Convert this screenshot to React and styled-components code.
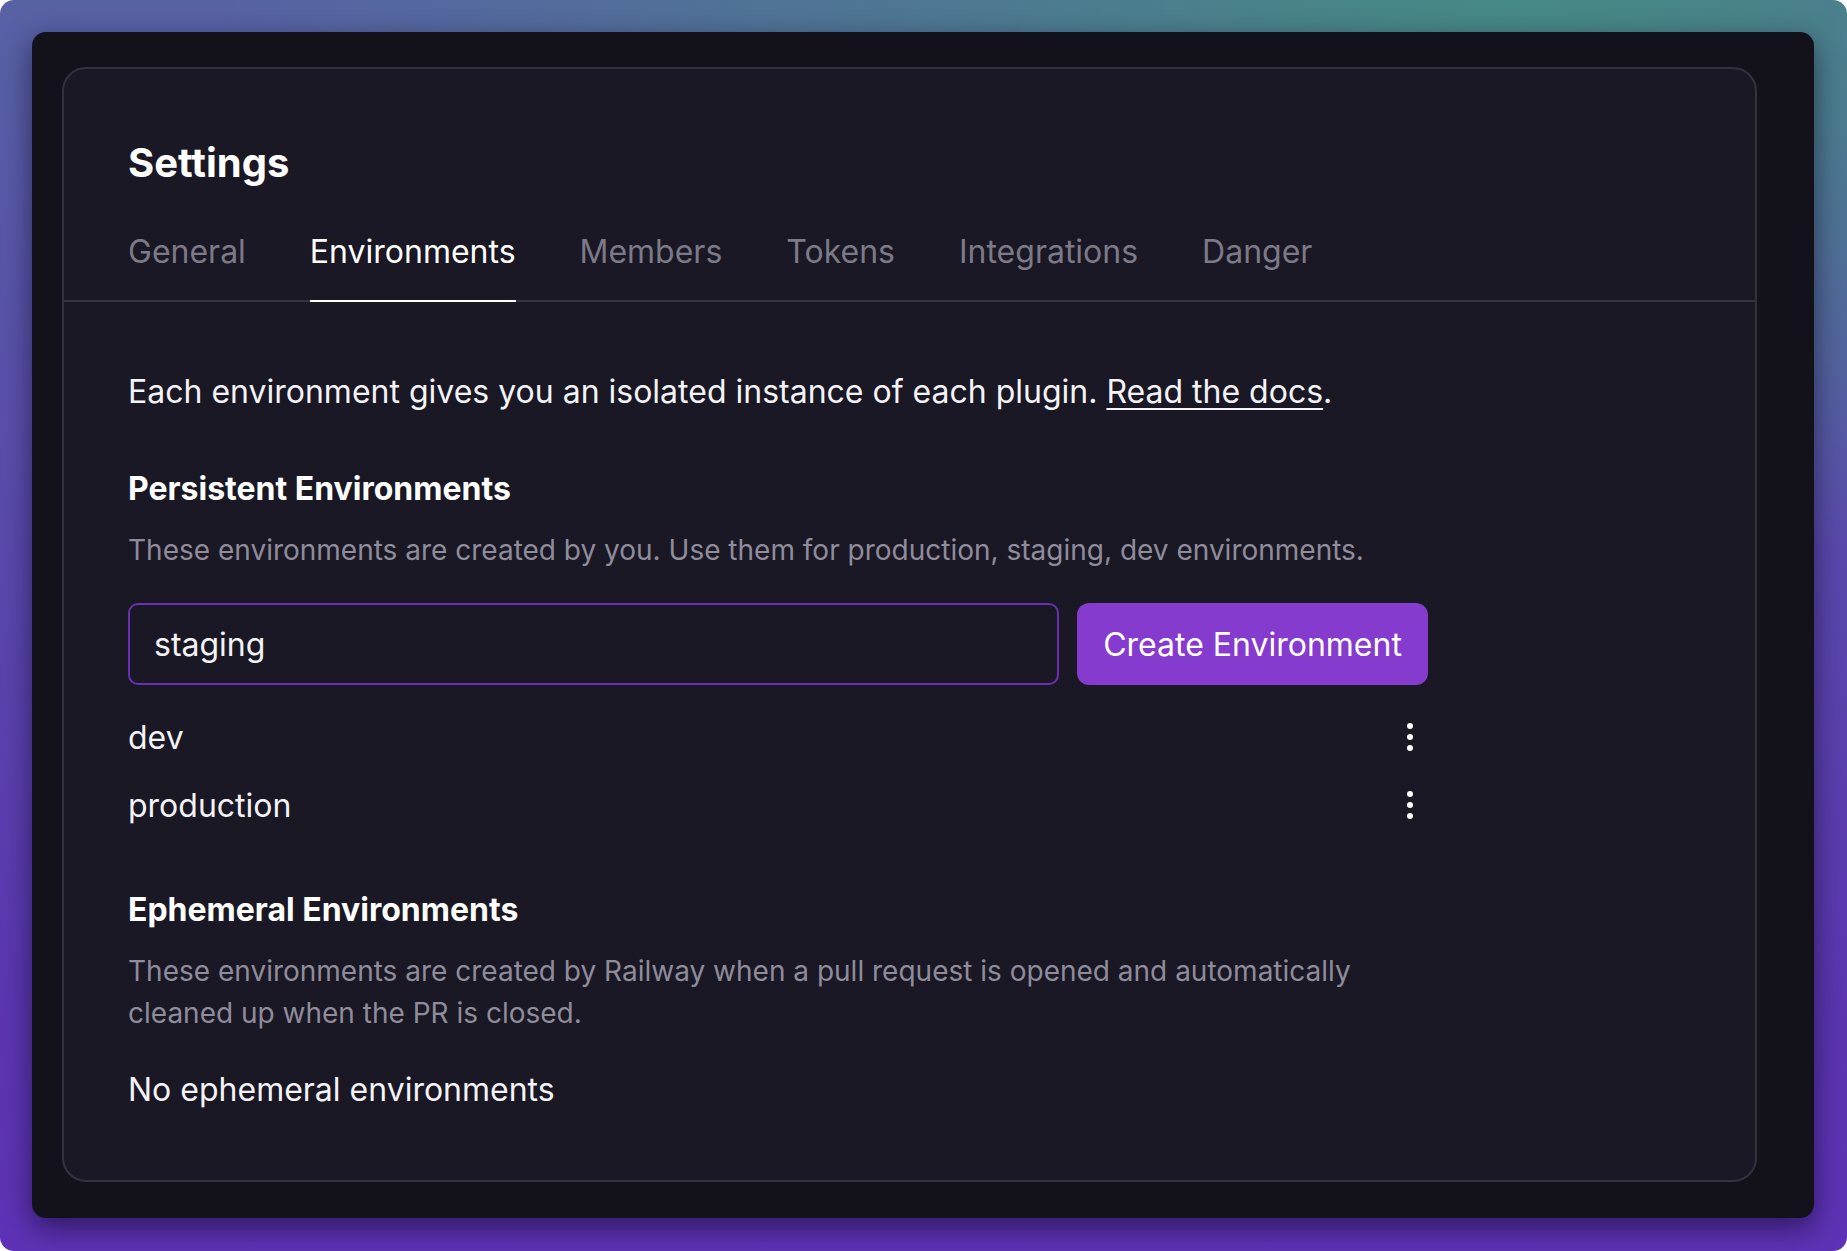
import React, { useState } from 'react';
import styled, { createGlobalStyle } from 'styled-components';

const GlobalStyle = createGlobalStyle`
  html, body {
    margin: 0;
    padding: 0;
    background: #ffffff;
  }
  body {
    font-family: Inter, 'Noto Sans', 'Liberation Sans', sans-serif;
    -webkit-font-smoothing: antialiased;
  }
`;

const TABS = ['General', 'Environments', 'Members', 'Tokens', 'Integrations', 'Danger'];
const ENVIRONMENTS = ['dev', 'production'];

const App = () => {
  const [activeTab, setActiveTab] = useState('Environments');
  const [name, setName] = useState('staging');

  return (
    <>
      <GlobalStyle />
      <Backdrop>
        <Window>
          <Card>
            <Header>
              <Title>Settings</Title>
            </Header>
            <TabBar>
              {TABS.map((tab) => (
                <Tab
                  key={tab}
                  $active={tab === activeTab}
                  onClick={() => setActiveTab(tab)}
                >
                  {tab}
                </Tab>
              ))}
            </TabBar>
            <Body>
              <Description>
                Each environment gives you an isolated instance of each plugin.{' '}
                <DocsLink href="#">Read the docs</DocsLink>.
              </Description>

              <Section>
                <SectionTitle>Persistent Environments</SectionTitle>
                <Muted>
                  These environments are created by you. Use them for production,
                  staging, dev environments.
                </Muted>
                <CreateRow>
                  <NameInput
                    value={name}
                    onChange={(e) => setName(e.target.value)}
                  />
                  <CreateButton>Create Environment</CreateButton>
                </CreateRow>
                <EnvList>
                  {ENVIRONMENTS.map((env) => (
                    <EnvRow key={env}>
                      <span>{env}</span>
                      <MenuButton aria-label="More">
                        <svg width="6" height="28" viewBox="0 0 6 28">
                          <circle cx="3" cy="3" r="3" fill="#fff" />
                          <circle cx="3" cy="14" r="3" fill="#fff" />
                          <circle cx="3" cy="25" r="3" fill="#fff" />
                        </svg>
                      </MenuButton>
                    </EnvRow>
                  ))}
                </EnvList>
              </Section>

              <Section $ephemeral>
                <SectionTitle>Ephemeral Environments</SectionTitle>
                <Muted>
                  These environments are created by Railway when a pull request is
                  opened and automatically cleaned up when the PR is closed.
                </Muted>
                <EmptyText>No ephemeral environments</EmptyText>
              </Section>
            </Body>
          </Card>
        </Window>
      </Backdrop>
    </>
  );
};

const Backdrop = styled.div`
  width: 1847px;
  height: 1251px;
  box-sizing: border-box;
  padding: 32px 33px 33px 32px;
  border-radius: 14px;
  overflow: hidden;
  display: flex;
  background:
    radial-gradient(ellipse 70% 45% at 82% 0%, #468a84 0%, rgba(70, 138, 132, 0) 100%),
    linear-gradient(180deg, #5762a4 0%, #5a48ac 45%, #5b36b0 80%, #5e32b6 100%);
`;

const Window = styled.div`
  flex: 1;
  display: flex;
  box-sizing: border-box;
  padding: 35px 57px 36px 30px;
  background: #13121b;
  border-radius: 14px;
  box-shadow: 0 10px 28px rgba(10, 6, 30, 0.55);
`;

const Card = styled.div`
  flex: 1;
  box-sizing: border-box;
  background: #1a1824;
  border: 2px solid #34323e;
  border-radius: 24px;
  display: flex;
  flex-direction: column;
`;

const Header = styled.div`
  padding: 70px 64px 0;
`;

const Title = styled.h1`
  margin: 0;
  font-size: 40px;
  line-height: 48px;
  font-weight: 700;
  color: #ffffff;
`;

const TabBar = styled.div`
  display: flex;
  gap: 64px;
  padding: 41px 64px 0;
  border-bottom: 2px solid #35333f;
`;

const Tab = styled.div`
  font-size: 32px;
  line-height: 48px;
  padding-bottom: 24px;
  margin-bottom: -2px;
  color: ${(p) => (p.$active ? '#ffffff' : '#7d7a88')};
  border-bottom: 2px solid ${(p) => (p.$active ? '#ffffff' : 'transparent')};
  cursor: pointer;
`;

const Body = styled.div`
  padding: 66px 64px 0;
  max-width: 1300px;
`;

const Description = styled.p`
  margin: 0;
  font-size: 32px;
  line-height: 48px;
  color: #f4f3f7;
`;

const DocsLink = styled.a`
  color: #f4f3f7;
  text-decoration: underline;
  text-underline-offset: 5px;
  text-decoration-thickness: 2px;
`;

const Section = styled.section`
  margin-top: ${(p) => (p.$ephemeral ? '50px' : '52px')};
  display: flex;
  flex-direction: column;
`;

const SectionTitle = styled.h2`
  margin: 0;
  font-size: 32px;
  line-height: 42px;
  font-weight: 700;
  color: #ffffff;
`;

const Muted = styled.p`
  margin: 19px 0 0;
  font-size: 28px;
  line-height: 42px;
  color: #8f8c9b;
`;

const CreateRow = styled.div`
  display: flex;
  gap: 18px;
  margin-top: 32px;
`;

const NameInput = styled.input`
  flex: 1;
  height: 82px;
  box-sizing: border-box;
  padding: 0 24px;
  background: transparent;
  border: 2px solid #6a2fb3;
  border-radius: 10px;
  font-family: inherit;
  font-size: 32px;
  color: #f4f3f7;
  outline: none;
`;

const CreateButton = styled.button`
  width: 351px;
  height: 82px;
  border: none;
  border-radius: 12px;
  background: #853bce;
  color: #ffffff;
  font-family: inherit;
  font-size: 32px;
  cursor: pointer;
`;

const EnvList = styled.div`
  display: flex;
  flex-direction: column;
  margin-top: 18px;
`;

const EnvRow = styled.div`
  height: 68px;
  display: flex;
  align-items: center;
  justify-content: space-between;
  font-size: 32px;
  color: #f4f3f7;
`;

const MenuButton = styled.button`
  display: flex;
  align-items: center;
  justify-content: center;
  width: 24px;
  height: 40px;
  margin-right: 6px;
  padding: 0;
  border: none;
  background: none;
  cursor: pointer;
`;

const EmptyText = styled.p`
  margin: 32px 0 0;
  font-size: 32px;
  line-height: 48px;
  color: #f4f3f7;
`;

export default App;
